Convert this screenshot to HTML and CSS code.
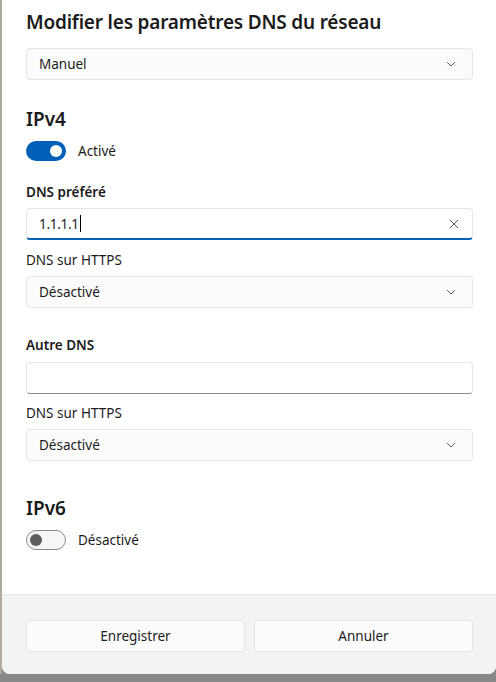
FILE: index.html
```html
<!DOCTYPE html>
<html lang="fr">
<head>
<meta charset="utf-8">
<title>Modifier les paramètres DNS du réseau</title>
<link rel="stylesheet" href="styles.css">
</head>
<body>
<div class="screen">
  <div class="strip"></div>
  <div class="dialog">
    <div class="content">
      <h1 class="title">Modifier les paramètres DNS du réseau</h1>
      <div class="select select-mode">
        <span>Manuel</span>
        <svg class="chev" width="10" height="6" viewBox="0 0 10 6"><path d="M1 1 L5 5 L9 1" fill="none" stroke="#606060" stroke-width="1"/></svg>
      </div>

      <h2 class="heading heading-v4">IPv4</h2>
      <div class="toggle-row">
        <span class="toggle on"><span class="knob"></span></span>
        <span class="toggle-label">Activé</span>
      </div>

      <div class="label bold label-pref">DNS préféré</div>
      <div class="input focused">
        <span class="value">1.1.1.1</span><span class="caret"></span>
        <svg class="clear" width="10" height="10" viewBox="0 0 10 10"><path d="M1 1 L9 9 M9 1 L1 9" fill="none" stroke="#5a5a5a" stroke-width="1"/></svg>
      </div>
      <div class="label label-https">DNS sur HTTPS</div>
      <div class="select">
        <span>Désactivé</span>
        <svg class="chev" width="10" height="6" viewBox="0 0 10 6"><path d="M1 1 L5 5 L9 1" fill="none" stroke="#606060" stroke-width="1"/></svg>
      </div>

      <div class="label bold label-alt">Autre DNS</div>
      <div class="input empty"></div>
      <div class="label label-https2">DNS sur HTTPS</div>
      <div class="select">
        <span>Désactivé</span>
        <svg class="chev" width="10" height="6" viewBox="0 0 10 6"><path d="M1 1 L5 5 L9 1" fill="none" stroke="#606060" stroke-width="1"/></svg>
      </div>

      <h2 class="heading heading-v6">IPv6</h2>
      <div class="toggle-row">
        <span class="toggle off"><span class="knob"></span></span>
        <span class="toggle-label">Désactivé</span>
      </div>
    </div>
    <div class="footer">
      <button class="btn">Enregistrer</button>
      <button class="btn">Annuler</button>
    </div>
  </div>
</div>
</body>
</html>
```
FILE: styles.css
```css
* { box-sizing: border-box; }
html, body { margin: 0; padding: 0; }
body {
  background: #888888;
  font-family: "Noto Sans", "Open Sans", sans-serif;
  color: #1b1b1b;
  width: 496px;
  height: 682px;
  overflow: hidden;
}
.screen {
  display: flex;
  height: 674px;
}
.strip {
  width: 2px;
  background: #adab9c;
}
.dialog {
  flex: 1;
  display: flex;
  flex-direction: column;
  background: #ffffff;
  border-radius: 0 0 8px 8px;
  overflow: hidden;
}
.content {
  flex: 1;
  padding: 8px 23px 0 24px;
  display: flex;
  flex-direction: column;
}
.title {
  margin: 0;
  font-size: 19px;
  line-height: 28px;
  font-weight: 600;
  letter-spacing: -0.2px;
}
.select, .input {
  height: 32px;
  border: 1px solid #e5e5e5;
  border-radius: 4px;
  background: #fbfbfb;
  display: flex;
  align-items: center;
  padding: 0 12px;
  font-size: 13.5px;
}
.select span { flex: 1; }
.select-mode { margin-top: 12px; }
.chev { margin-right: 4px; }
.heading {
  margin: 0;
  font-size: 19px;
  line-height: 28px;
  font-weight: 600;
}
.heading-v4 { margin-top: 25px; }
.heading-v6 { margin-top: 33px; }
.toggle-row {
  display: flex;
  align-items: center;
  margin-top: 8px;
  height: 20px;
}
.toggle {
  width: 40px;
  height: 20px;
  border-radius: 10px;
  display: flex;
  align-items: center;
  padding: 0 4px;
}
.toggle .knob {
  width: 12px;
  height: 12px;
  border-radius: 50%;
}
.toggle.on {
  background: #005fb8;
  justify-content: flex-end;
}
.toggle.on .knob { background: #ffffff; }
.toggle.off {
  border: 1px solid #8a8a8a;
  background: #f6f6f6;
  justify-content: flex-start;
  padding: 0 3px;
}
.toggle.off .knob { background: #5d5d5d; }
.toggle-label {
  margin-left: 12px;
  font-size: 13.5px;
}
.label {
  font-size: 13.5px;
  line-height: 20px;
}
.label.bold { font-weight: 600; }
.label-pref { margin-top: 21px; margin-bottom: 6px; }
.label-https { margin-top: 10px; margin-bottom: 6px; }
.label-alt { margin-top: 27px; margin-bottom: 7px; }
.label-https2 { margin-top: 9px; margin-bottom: 6px; }
.input.focused {
  background: #ffffff;
  border-bottom: 2px solid #005fb8;
}
.input.empty {
  background: #ffffff;
  border-bottom: 1px solid #8a8a8a;
}
.value { letter-spacing: -0.3px; }
.caret {
  width: 1px;
  height: 17px;
  background: #000;
  margin-left: 1px;
}
.clear { margin-left: auto; margin-right: 1px; }
.footer {
  height: 80px;
  background: #f3f3f3;
  border-top: 1px solid #e5e5e5;
  display: flex;
  gap: 9px;
  padding: 25px 23px 0 24px;
}
.btn {
  flex: 1;
  height: 32px;
  border: 1px solid #e3e3e3;
  border-radius: 4px;
  background: #fbfbfb;
  font-family: inherit;
  font-size: 13.5px;
  color: #1b1b1b;
}
```
